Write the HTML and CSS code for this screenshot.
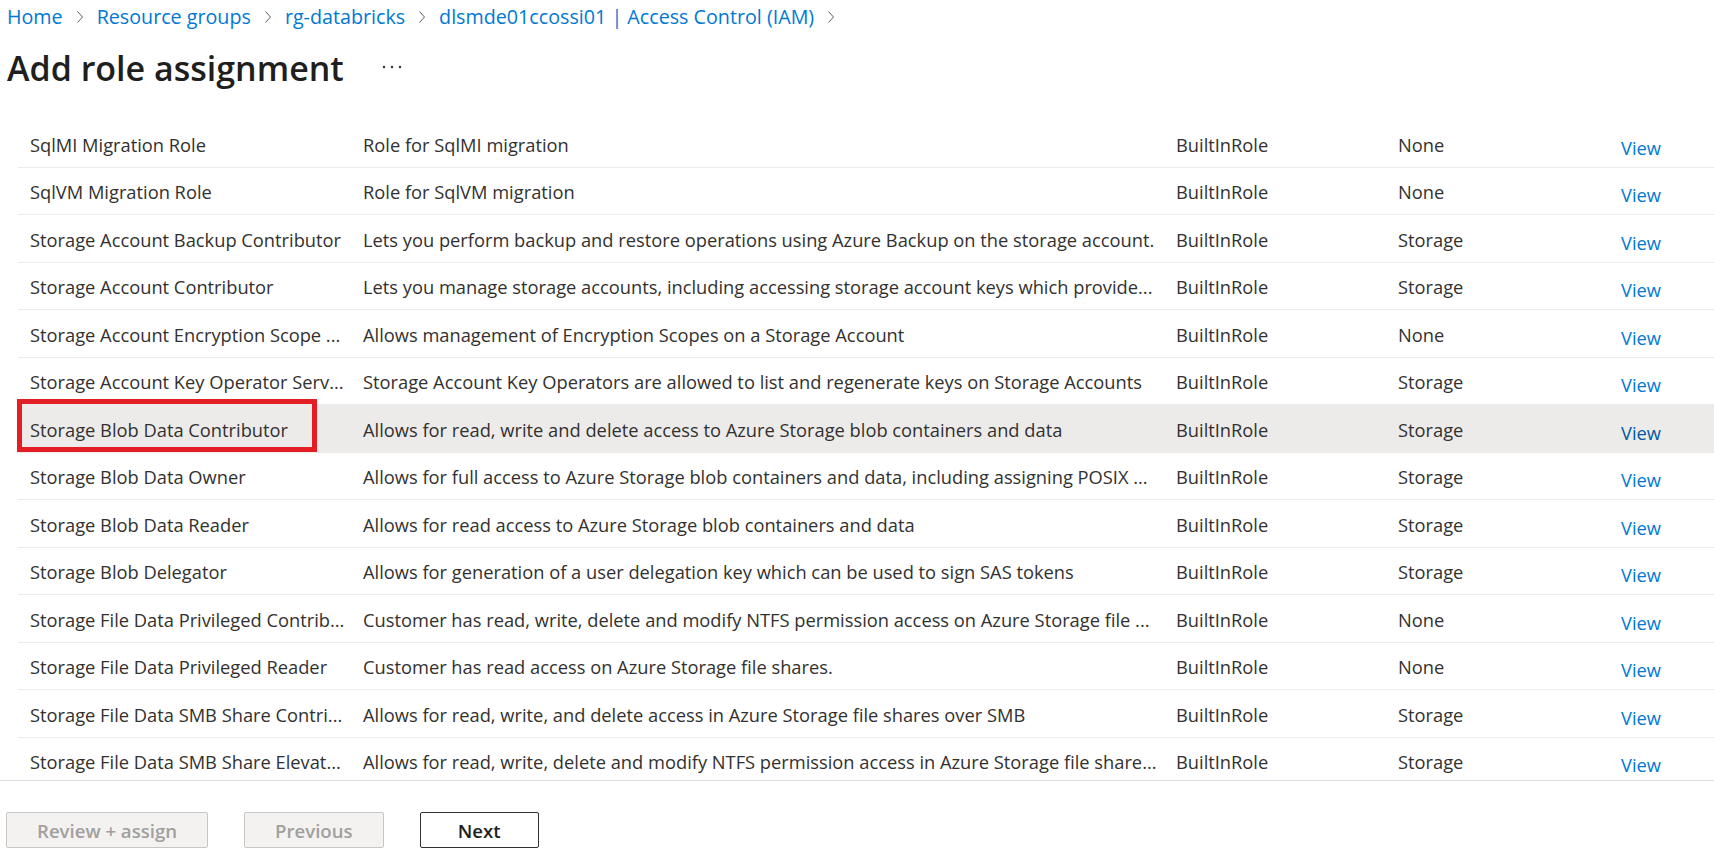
FILE: index.html
```html
<!DOCTYPE html>
<html lang="en">
<head>
<meta charset="utf-8">
<title>Add role assignment</title>
<link rel="stylesheet" href="styles.css">
</head>
<body>
<div class="page">
  <header class="header">
    <nav class="breadcrumb">
      <a class="crumb" href="#">Home</a>
      <svg class="chev" width="8" height="12" viewBox="0 0 8 12"><polyline points="1.5,0.5 6.5,6 1.5,11.5" fill="none" stroke="#605e5c" stroke-width="1"/></svg>
      <a class="crumb" href="#">Resource groups</a>
      <svg class="chev" width="8" height="12" viewBox="0 0 8 12"><polyline points="1.5,0.5 6.5,6 1.5,11.5" fill="none" stroke="#605e5c" stroke-width="1"/></svg>
      <a class="crumb" href="#">rg-databricks</a>
      <svg class="chev" width="8" height="12" viewBox="0 0 8 12"><polyline points="1.5,0.5 6.5,6 1.5,11.5" fill="none" stroke="#605e5c" stroke-width="1"/></svg>
      <a class="crumb" href="#">dlsmde01ccossi01 | Access Control (IAM)</a>
      <svg class="chev" width="8" height="12" viewBox="0 0 8 12"><polyline points="1.5,0.5 6.5,6 1.5,11.5" fill="none" stroke="#605e5c" stroke-width="1"/></svg>
    </nav>
    <div class="title-row">
      <h1 class="title">Add role assignment</h1>
      <button class="more" aria-label="More">
        <svg width="20" height="6" viewBox="0 0 20 6"><circle cx="2" cy="3" r="1.2" fill="#323130"/><circle cx="10" cy="3" r="1.2" fill="#323130"/><circle cx="18" cy="3" r="1.2" fill="#323130"/></svg>
      </button>
    </div>
  </header>

  <main class="grid-wrap">
    <div class="grid">
      <div class="row"><div class="cell">SqlMI Migration Role</div><div class="cell">Role for SqlMI migration</div><div class="cell">BuiltInRole</div><div class="cell">None</div><div class="cell"><a class="view" href="#">View</a></div></div>
      <div class="row"><div class="cell">SqlVM Migration Role</div><div class="cell">Role for SqlVM migration</div><div class="cell">BuiltInRole</div><div class="cell">None</div><div class="cell"><a class="view" href="#">View</a></div></div>
      <div class="row"><div class="cell">Storage Account Backup Contributor</div><div class="cell">Lets you perform backup and restore operations using Azure Backup on the storage account.</div><div class="cell">BuiltInRole</div><div class="cell">Storage</div><div class="cell"><a class="view" href="#">View</a></div></div>
      <div class="row"><div class="cell">Storage Account Contributor</div><div class="cell">Lets you manage storage accounts, including accessing storage account keys which provide...</div><div class="cell">BuiltInRole</div><div class="cell">Storage</div><div class="cell"><a class="view" href="#">View</a></div></div>
      <div class="row"><div class="cell">Storage Account Encryption Scope ...</div><div class="cell">Allows management of Encryption Scopes on a Storage Account</div><div class="cell">BuiltInRole</div><div class="cell">None</div><div class="cell"><a class="view" href="#">View</a></div></div>
      <div class="row"><div class="cell">Storage Account Key Operator Serv...</div><div class="cell">Storage Account Key Operators are allowed to list and regenerate keys on Storage Accounts</div><div class="cell">BuiltInRole</div><div class="cell">Storage</div><div class="cell"><a class="view" href="#">View</a></div></div>
      <div class="row row--selected"><div class="cell cell--marked">Storage Blob Data Contributor<span class="mark"></span></div><div class="cell">Allows for read, write and delete access to Azure Storage blob containers and data</div><div class="cell">BuiltInRole</div><div class="cell">Storage</div><div class="cell"><a class="view" href="#">View</a></div></div>
      <div class="row"><div class="cell">Storage Blob Data Owner</div><div class="cell">Allows for full access to Azure Storage blob containers and data, including assigning POSIX ...</div><div class="cell">BuiltInRole</div><div class="cell">Storage</div><div class="cell"><a class="view" href="#">View</a></div></div>
      <div class="row"><div class="cell">Storage Blob Data Reader</div><div class="cell">Allows for read access to Azure Storage blob containers and data</div><div class="cell">BuiltInRole</div><div class="cell">Storage</div><div class="cell"><a class="view" href="#">View</a></div></div>
      <div class="row"><div class="cell">Storage Blob Delegator</div><div class="cell">Allows for generation of a user delegation key which can be used to sign SAS tokens</div><div class="cell">BuiltInRole</div><div class="cell">Storage</div><div class="cell"><a class="view" href="#">View</a></div></div>
      <div class="row"><div class="cell">Storage File Data Privileged Contrib...</div><div class="cell">Customer has read, write, delete and modify NTFS permission access on Azure Storage file ...</div><div class="cell">BuiltInRole</div><div class="cell">None</div><div class="cell"><a class="view" href="#">View</a></div></div>
      <div class="row"><div class="cell">Storage File Data Privileged Reader</div><div class="cell">Customer has read access on Azure Storage file shares.</div><div class="cell">BuiltInRole</div><div class="cell">None</div><div class="cell"><a class="view" href="#">View</a></div></div>
      <div class="row"><div class="cell">Storage File Data SMB Share Contri...</div><div class="cell">Allows for read, write, and delete access in Azure Storage file shares over SMB</div><div class="cell">BuiltInRole</div><div class="cell">Storage</div><div class="cell"><a class="view" href="#">View</a></div></div>
      <div class="row"><div class="cell">Storage File Data SMB Share Elevat...</div><div class="cell">Allows for read, write, delete and modify NTFS permission access in Azure Storage file share...</div><div class="cell">BuiltInRole</div><div class="cell">Storage</div><div class="cell"><a class="view" href="#">View</a></div></div>
    </div>
  </main>

  <footer class="footer">
    <button class="btn btn--disabled" disabled>Review + assign</button>
    <button class="btn btn--disabled" disabled>Previous</button>
    <button class="btn btn--default">Next</button>
  </footer>
</div>
</body>
</html>
```

FILE: styles.css
```css
* {
  box-sizing: border-box;
}

html, body {
  margin: 0;
  padding: 0;
  background: #ffffff;
}

body {
  font-family: "Open Sans", "Noto Sans", "Liberation Sans", sans-serif;
  color: #323130;
  overflow: hidden;
}

.page {
  display: flex;
  flex-direction: column;
  height: 865px;
}

/* Header */
.header {
  padding: 5px 0 0 7px;
}

.breadcrumb {
  display: flex;
  align-items: center;
  gap: 13px;
  height: 24px;
  font-size: 19.7px;
  line-height: 24px;
}

.crumb {
  color: #0078d4;
  text-decoration: none;
  white-space: nowrap;
}

.chev {
  display: block;
  flex: none;
}

.title-row {
  display: flex;
  align-items: center;
  margin-top: 18.5px;
  height: 40px;
}

.title {
  margin: 0;
  font-size: 34px;
  line-height: 40px;
  font-weight: 600;
  color: #201f1e;
  white-space: nowrap;
}

.more {
  display: flex;
  align-items: center;
  justify-content: center;
  margin-left: 38px;
  padding: 0;
  border: 0;
  background: transparent;
  width: 20px;
  height: 20px;
  margin-top: -2px;
}

/* Grid */
.grid-wrap {
  flex: 1;
  overflow: hidden;
  margin-top: 32.5px;
  padding-left: 18px;
}

.row {
  display: grid;
  grid-template-columns: 333px 813px 222px 223px 1fr;
  height: 47.5px;
  border-bottom: 1px solid #edebe9;
  font-size: 18.3px;
  line-height: 46px;
}

.row--selected {
  background: #edebe9;
}

.cell {
  position: relative;
  padding: 1.5px 0 0 12px;
  white-space: nowrap;
  overflow: hidden;
}

.cell--marked {
  overflow: visible;
}

.mark {
  position: absolute;
  left: -1px;
  top: -6px;
  width: 300px;
  height: 53px;
  border: 5px solid #e31e25;
  pointer-events: none;
}

.view {
  display: inline-block;
  color: #0078d4;
  text-decoration: none;
  transform: translateY(3px);
}

.row--selected .view {
  color: #005a9e;
}

/* Footer */
.footer {
  display: flex;
  gap: 36px;
  border-top: 1px solid #e1dfdd;
  padding: 31px 0 0 6px;
  height: 85px;
}

.btn {
  min-width: 119px;
  height: 36px;
  padding: 0 30px;
  font-family: inherit;
  font-size: 18.6px;
  font-weight: 600;
  border-radius: 2px;
  white-space: nowrap;
}

.btn--disabled {
  background: #f3f2f1;
  border: 1px solid #c8c6c4;
  color: #a19f9d;
}

.btn--default {
  background: #ffffff;
  border: 1px solid #323130;
  color: #201f1e;
}
```
